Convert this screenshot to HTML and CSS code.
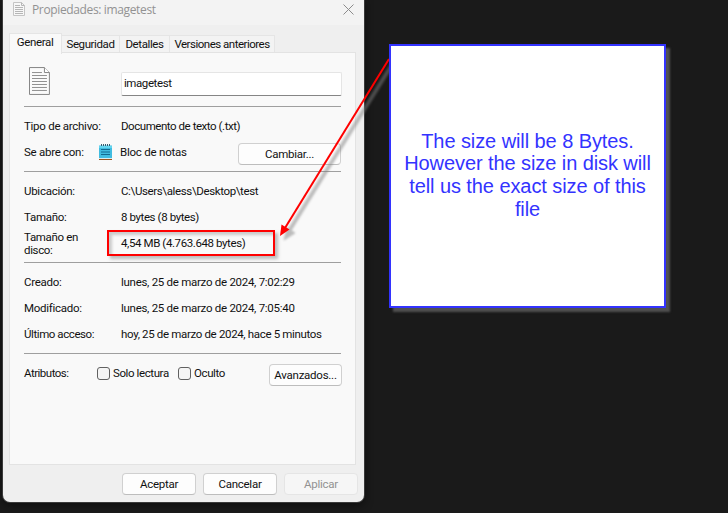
FILE: index.html
```html
<!DOCTYPE html>
<html lang="es">
<head>
<meta charset="utf-8">
<title>Propiedades: imagetest</title>
<link rel="stylesheet" href="styles.css">
</head>
<body>
<main class="desktop">
  <section class="dialog">
    <header class="titlebar">
      <svg class="title-icon" width="12" height="14" viewBox="0 0 12 14"><path d="M.5.5h8l3 3v10H.5z" fill="#f7f7f7" stroke="#c4c4c4"/><path d="M8.5.5v3h3M2 3.5h5M2 5.5h8M2 7.5h8M2 9.5h8M2 11.5h8" fill="none" stroke="#b5b5b5"/></svg>
      <h1 class="title"><span>Propiedades: imagetest</span></h1>
      <svg class="close" width="11" height="11" viewBox="0 0 11 11"><path d="M.5.5l10 10M10.500.5l-10 10" stroke="#8c8c8c" fill="none"/></svg>
    </header>
    <nav class="tabs">
      <span class="tab active">General</span>
      <span class="tab security">Seguridad</span>
      <span class="tab details">Detalles</span>
      <span class="tab versions">Versiones anteriores</span>
    </nav>
    <div class="panel">
      <div class="file-head">
        <svg class="file-icon" width="22" height="29" viewBox="0 0 22 29"><path d="M.5.5h15l5 5v22H.5z" fill="#fafafa" stroke="#858585"/><path d="M15.500.5v5h5" fill="#fff" stroke="#858585"/><path d="M3 5.500h10M3 8.500h15M3 11.500h15M3 14.500h15M3 17.500h15M3 20.500h15M3 23.500h15" stroke="#8f8f8f"/></svg>
        <div class="name-input"><span>imagetest</span></div>
      </div>
      <div class="group">
        <div class="row"><span class="label">Tipo de archivo:</span><span class="value type">Documento de texto (.txt)</span></div>
        <div class="row"><span class="label opens">Se abre con:</span>
          <svg class="notepad" width="13" height="17" viewBox="0 0 13 17"><path d="M0 1.500h13V15H0z" fill="#41bce0"/><path d="M0 2h13v2H0z" fill="#62d5ef"/><path d="M2.500 0v2M4.500 0v2M6.500 0v2M8.500 0v2M10.500 0v2" stroke="#315d70"/><path d="M2 5.500h9M2 8h9M2 10.500h9" stroke="#126b91" stroke-width="1.200"/><path d="M0 14.500h13V16H0z" fill="#9c551e"/><path d="M0 14h13v1H0z" fill="#d8eef2"/></svg>
          <span class="app">Bloc de notas</span><button class="btn change">Cambiar...</button></div>
      </div>
      <div class="group">
        <div class="row"><span class="label">Ubicación:</span><span class="value path">C:\Users\aless\Desktop\test</span></div>
        <div class="row"><span class="label">Tamaño:</span><span class="value size">8 bytes (8 bytes)</span></div>
        <div class="row"><span class="label two">Tamaño en<br>disco:</span><span class="value disk">4,54 MB (4.763.648 bytes)</span><i class="highlight"></i></div>
      </div>
      <div class="group">
        <div class="row"><span class="label">Creado:</span><span class="value date">lunes, 25 de marzo de 2024, 7:02:29</span></div>
        <div class="row"><span class="label">Modificado:</span><span class="value date">lunes, 25 de marzo de 2024, 7:05:40</span></div>
        <div class="row"><span class="label last">Último acceso:</span><span class="value access">hoy, 25 de marzo de 2024, hace 5 minutos</span></div>
      </div>
      <div class="group">
        <div class="row attrs"><span class="label attr-label">Atributos:</span><i class="check"></i><span class="check-label readonly">Solo lectura</span><i class="check"></i><span class="check-label">Oculto</span><button class="btn advanced">Avanzados...</button></div>
      </div>
    </div>
    <footer class="actions">
      <button class="btn">Aceptar</button>
      <button class="btn">Cancelar</button>
      <button class="btn" disabled>Aplicar</button>
    </footer>
  </section>
  <svg class="arrow" width="728" height="513" viewBox="0 0 728 513">
    <defs><filter id="soft" x="-10%" y="-10%" width="120%" height="120%"><feGaussianBlur stdDeviation="1.300"/></filter></defs>
    <g filter="url(#soft)" stroke="#808080" fill="#808080" opacity=".5"><path d="M393 63L289 231" stroke-width="4"/><path d="M284 240l3-12 8 5z"/></g>
    <path d="M389 59L285 228" stroke="#f00" stroke-width="2"/><path d="M280 236l1.500-11.500 8 5z" fill="#f00"/>
  </svg>
  <aside class="note"><p>The size will be 8 Bytes.<br>However the size in disk will<br>tell us the exact size of this<br>file</p></aside>
</main>
</body>
</html>
```
FILE: styles.css
```css
* { box-sizing: border-box; }
body { margin: 0; background: #1a1a1a; }
.desktop { position: relative; width: 728px; height: 513px; overflow: hidden; background: #1a1a1a; }
.dialog {
  position: absolute; left: 3px; top: 0; width: 361px; height: 502px;
  display: flex; flex-direction: column;
  background: #efefef; border-radius: 0 0 7px 7px;
  box-shadow: 0 0 0 1px #3a3a3a, 0 3px 8px #0d0d0d;
  font: 11.5px/14px Roboto, sans-serif; letter-spacing: -.22px; color: #111; white-space: nowrap;
}
.titlebar { display: flex; height: 25px; background: #f3f3f3; padding: 0 10px 0 10px; }
.title-icon { margin-top: 2px; }
.title { flex: 1; margin: 2px 0 0 7px; font: 12px/16px "Open Sans", sans-serif; letter-spacing: -.36px; color: #929292; }
.close { margin-top: 4px; }
.tabs { display: flex; height: 28px; padding: 7px 0 0 6px; align-items: flex-end; }
.tab { height: 18px; border: 1px solid #e5e5e5; border-left: 0; border-bottom: 0; background: #f3f3f3; text-align: center; line-height: 17px; letter-spacing: -.4px; }
.tab.active { width: 53px; height: 21px; border-left: 1px solid #e5e5e5; background: #f9f9f9; line-height: 17px; margin-bottom: -1px; z-index: 1; padding-right: 1px; letter-spacing: -.35px; }
.security { width: 58px; }
.details { width: 50px; }
.versions { width: 105px; letter-spacing: -.5px; }
.panel { width: 347px; height: 413px; margin: -1px 0 0 6px; padding: 14px 13px 0 14px; border: 1px solid #e3e3e3; background: #f9f9f9; }
.file-head { display: flex; height: 39px; padding-left: 5px; }
.file-icon { margin-right: 70px; }
.name-input { width: 222px; height: 24px; margin-top: 5px; padding: 3px 2px; border: 1px solid #e5e5e5; border-bottom-color: #858585; border-radius: 2px; background: #fff; letter-spacing: -.4px; }
.group { width: 317px; padding: 6px 0; border-top: 1px solid #9f9f9f; }
.row { position: relative; display: flex; align-items: center; height: 26px; }
.label { width: 97px; flex: none; letter-spacing: -.27px; }
.label.opens { width: 75px; }
.label.two { line-height: 13px; padding-top: 1px; letter-spacing: -.35px; }
.label.last { letter-spacing: -.42px; }
.type { letter-spacing: -.45px; }
.path { letter-spacing: -.37px; }
.size, .disk { letter-spacing: -.4px; }
.date { letter-spacing: -.28px; }
.access { letter-spacing: -.34px; }
.notepad { margin-right: 8px; }
.btn { width: 74px; height: 22px; padding: 0; border: 1px solid #d0d0d0; border-bottom-color: #bdbdbd; border-radius: 4px; background: #fdfdfd; color: #111; font: inherit; letter-spacing: -.25px; text-align: center; }
.btn.change { width: 103px; margin-left: auto; position: relative; top: 2px; }
.highlight { position: absolute; left: 83px; top: 0; width: 168px; height: 26px; border: 2px solid #f00; box-shadow: 3px 3px 3px #8888, inset 3px 3px 3px #8886; }
.attrs { width: 318px; }
.attr-label { width: 73px; letter-spacing: -.5px; }
.check { flex: none; width: 13px; height: 13px; border: 1px solid #616161; border-radius: 3px; background: #f5f5f5; margin-right: 3px; }
.check-label { letter-spacing: -.4px; }
.readonly { width: 65px; }
.btn.advanced { width: 73px; margin-left: auto; margin-top: 3px; }
.actions { display: flex; gap: 7px; padding: 8px 0 0 119px; }
.btn:disabled { color: #929292; border-color: #e5e5e5; background: #f6f6f6; }
.arrow { position: absolute; left: 0; top: 0; }
.note { position: absolute; left: 389px; top: 44px; width: 277px; height: 264px; display: flex; align-items: center; justify-content: center; border: 2px solid #33f; background: #fff; box-shadow: 4px 4px 2px #505050; color: #33f; font: 20px/22.6px "Liberation Sans", sans-serif; letter-spacing: -.08px; text-align: center; }
.note p { margin: -2px 0 0; }
```
